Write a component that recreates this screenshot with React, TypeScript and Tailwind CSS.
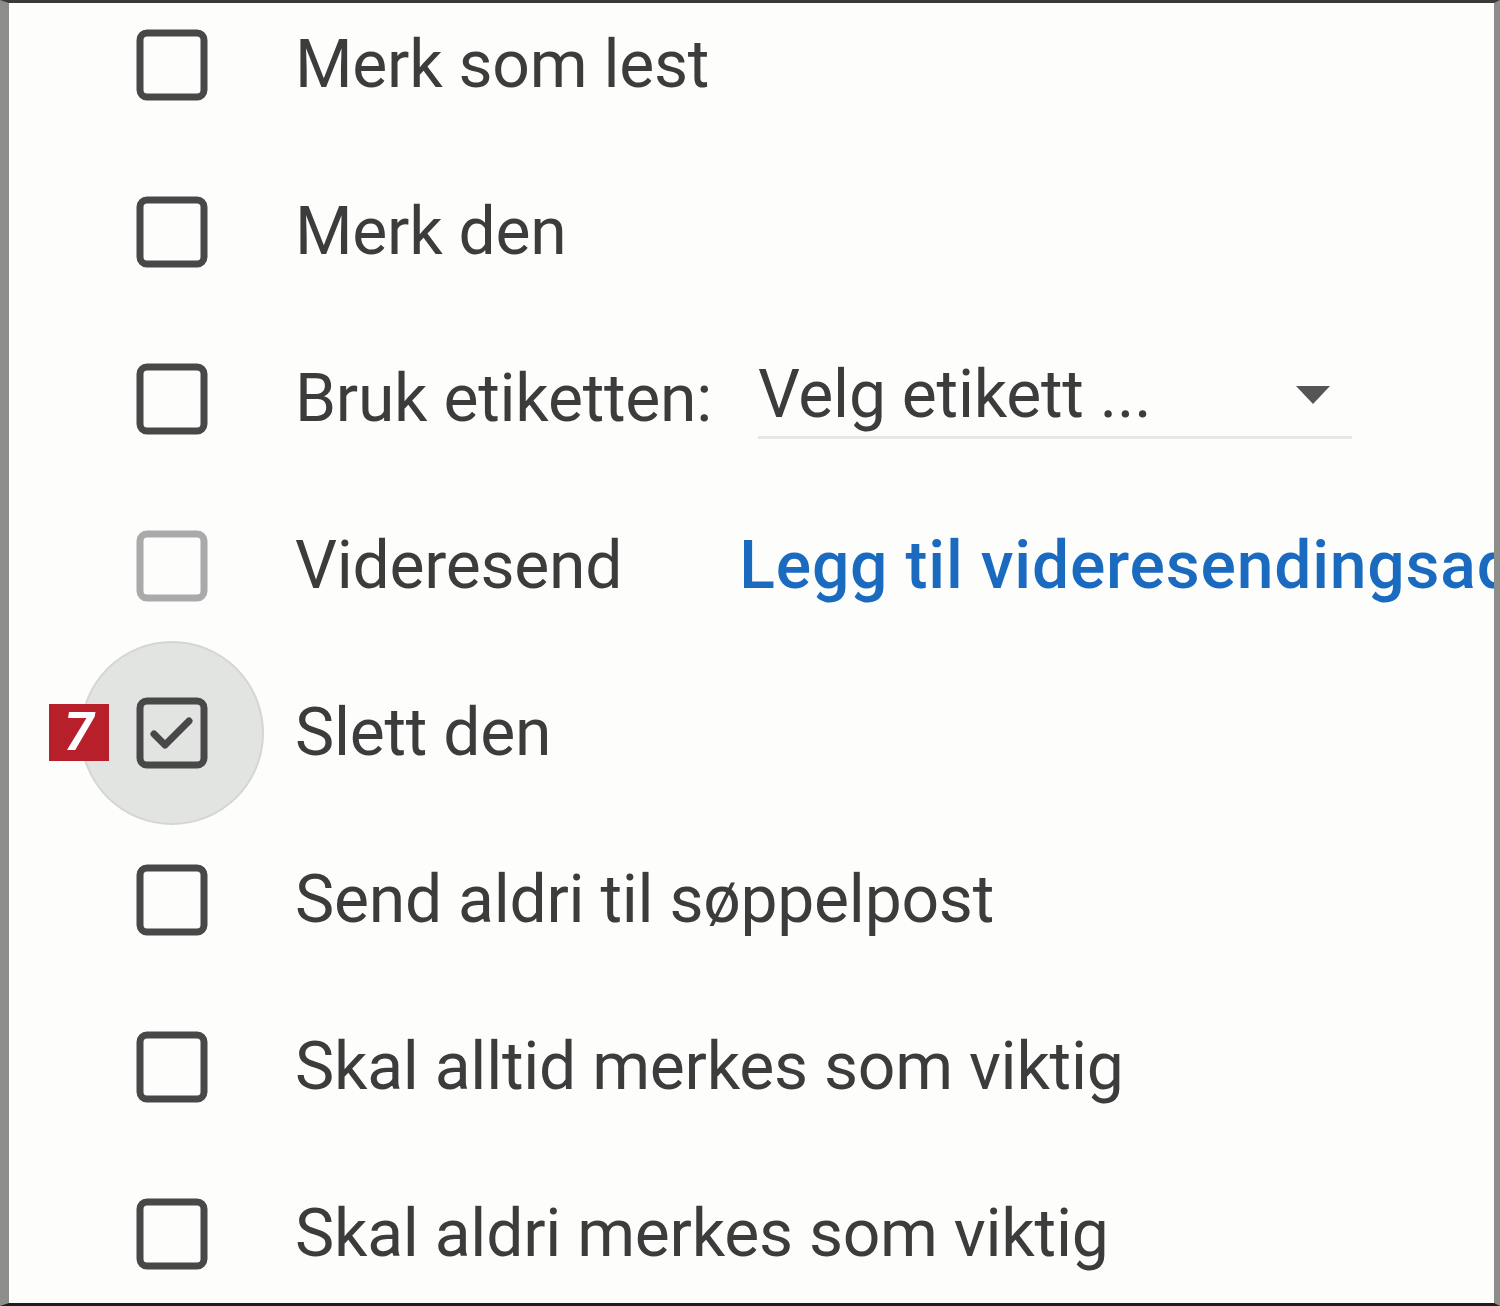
const rows = [
  { label: "Merk som lest" },
  { label: "Merk den" },
  { label: "Bruk etiketten:", select: true },
  { label: "Videresend", link: true, disabled: true },
  { label: "Slett den", checked: true, badge: "7" },
  { label: "Send aldri til søppelpost" },
  { label: "Skal alltid merkes som viktig" },
  { label: "Skal aldri merkes som viktig" },
];

function Box({ checked, disabled }: { checked?: boolean; disabled?: boolean }) {
  return (
    <svg width="72" height="72" viewBox="0 0 72 72" fill="none">
      <rect
        x="4"
        y="4"
        width="64"
        height="64"
        rx="7"
        stroke={disabled ? "#a9aaa9" : "#484848"}
        strokeWidth="7"
        fill="none"
      />
      {checked && (
        <path
          d="M18 37l11 11 24-24"
          stroke="#484848"
          strokeWidth="7"
          strokeLinecap="round"
          strokeLinejoin="round"
        />
      )}
    </svg>
  );
}

export default function App() {
  return (
    <div
      className="w-[1500px] h-[1306px] overflow-hidden bg-[#fdfdfc] border-l-[9px] border-r-[6px] border-t-[3px] border-b-[3px] border-l-[#8d8d8b] border-r-[#8d8d8b] border-t-[#3a3a3a] border-b-[#1e1e1e]"
      style={{ fontFamily: "Roboto, 'Liberation Sans', sans-serif" }}
    >
      <div className="-mt-[22px] flex flex-col">
        {rows.map((r) => (
          <div key={r.label} className="h-[167px] flex items-center shrink-0 whitespace-nowrap">
            <div className="relative ml-[127px] w-[72px] h-[72px] shrink-0">
              {r.checked && (
                <div className="absolute left-1/2 top-1/2 -translate-x-1/2 -translate-y-1/2 w-[184px] h-[184px] rounded-full bg-[#e2e4e2] border-2 border-[#d3d6d3]" />
              )}
              {r.badge && (
                <div className="absolute left-[-87px] top-[7px] w-[60px] h-[57px] bg-[#b7202b] text-white flex items-center justify-center text-[54px] font-bold italic leading-none">
                  {r.badge}
                </div>
              )}
              <div className="relative">
                <Box checked={r.checked} disabled={r.disabled} />
              </div>
            </div>
            <span className="ml-[87px] text-[66px] leading-none text-[#3c3c3c] tracking-[-0.25px]">
              {r.label}
            </span>
            {r.select && (
              <div className="ml-[46px] w-[594px] h-[80px] flex items-center border-b-[3px] border-[#e6e7e6] pb-1">
                <span className="text-[66px] leading-none text-[#3c3c3c] tracking-[-0.25px]">
                  Velg etikett ...
                </span>
                <svg className="ml-auto mr-[20px]" width="38" height="22" viewBox="0 0 38 22">
                  <path d="M2 2h34L19 20z" fill="#555555" />
                </svg>
              </div>
            )}
            {r.link && (
              <span className="ml-[117px] text-[66px] leading-none font-medium text-[#1a6bc0] tracking-[0.8px]">
                Legg til videresendingsadresse
              </span>
            )}
          </div>
        ))}
      </div>
    </div>
  );
}
